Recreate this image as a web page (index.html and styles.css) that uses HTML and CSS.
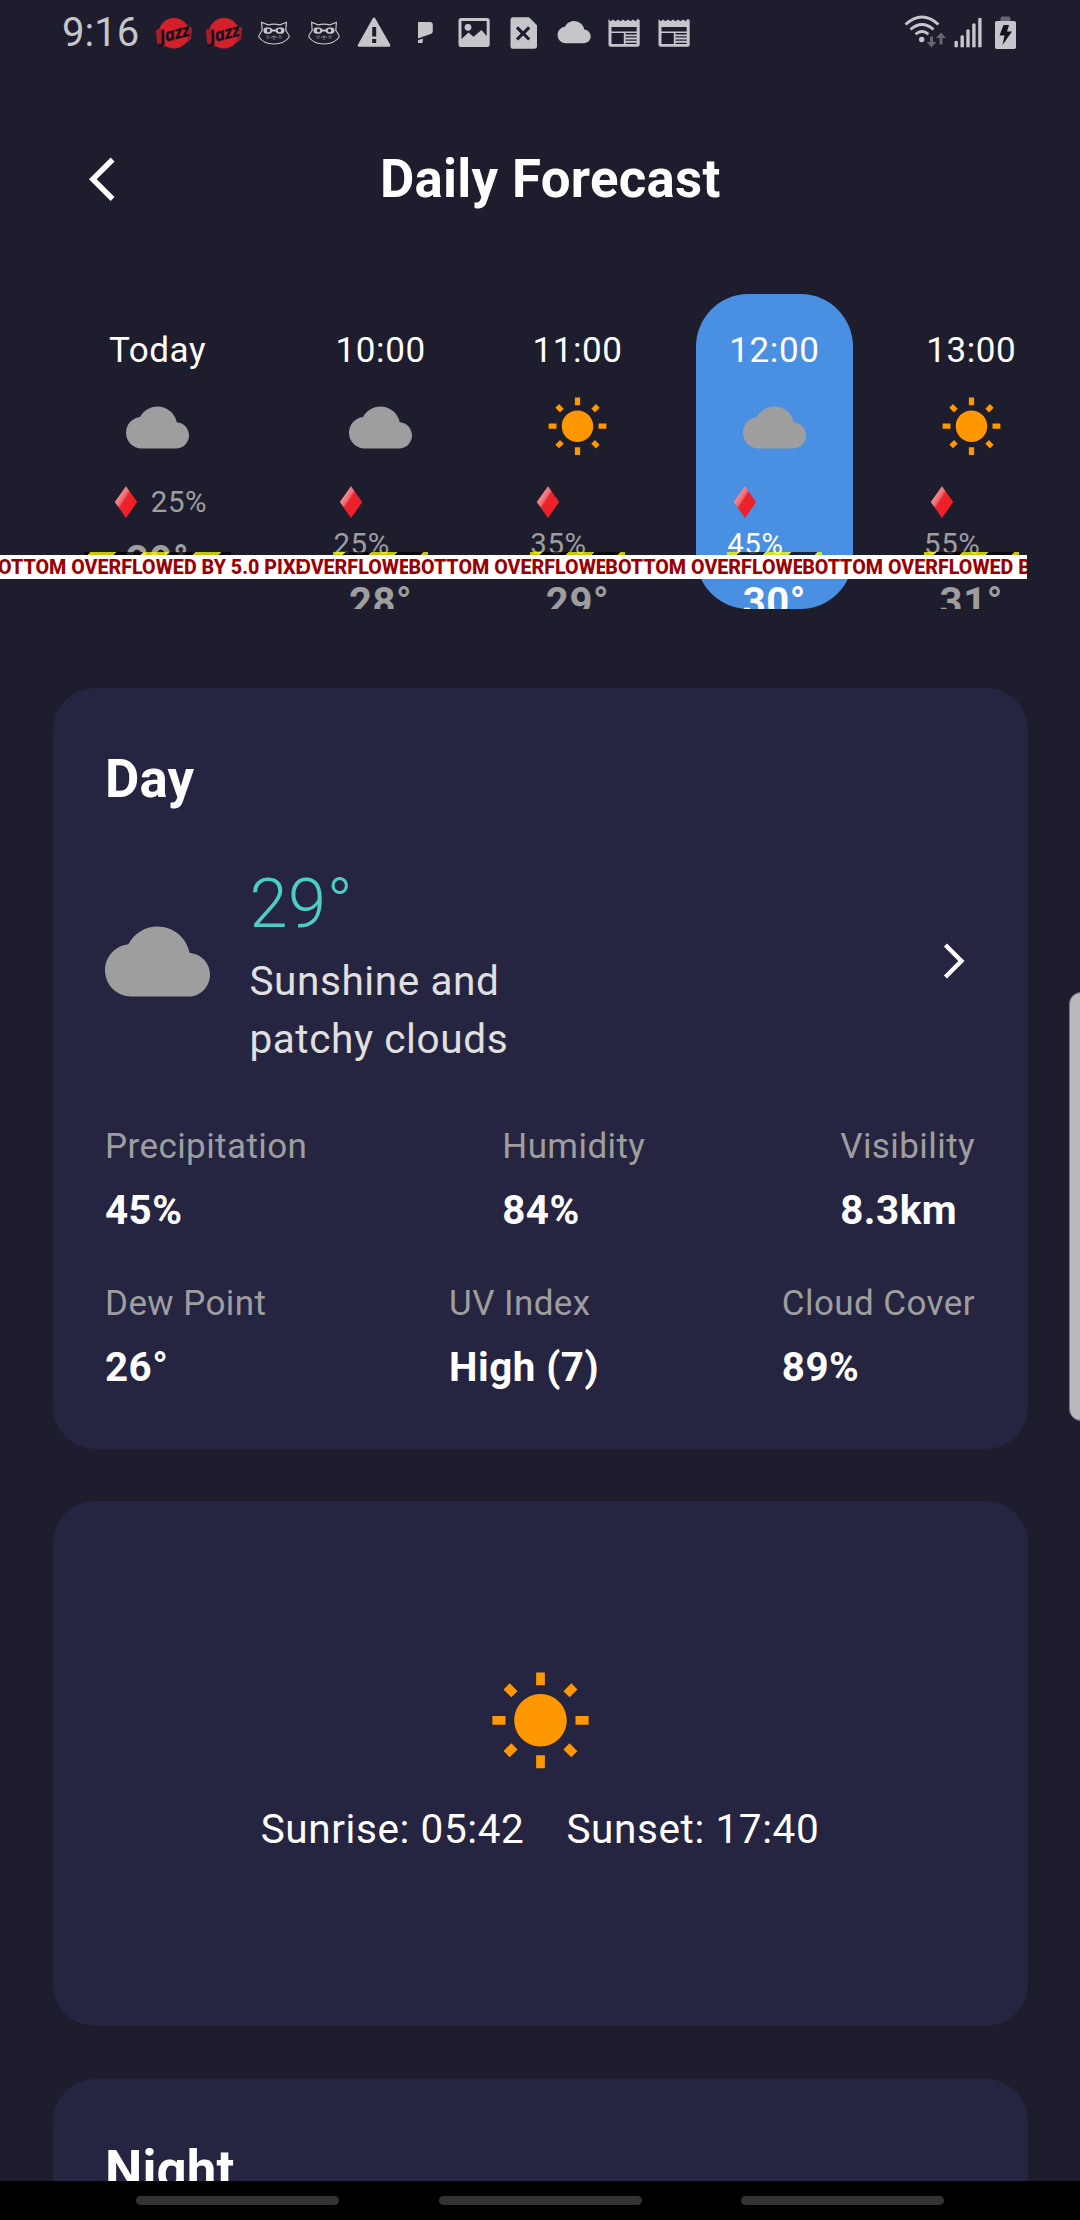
FILE: index.html
```html
<!DOCTYPE html>
<html lang="en">
<head>
<meta charset="utf-8">
<title>Daily Forecast</title>
<link rel="stylesheet" href="styles.css">
</head>
<body>
<svg class="defs" width="0" height="0" aria-hidden="true">
  <defs>
    <linearGradient id="gem" x1="0.1" y1="0.1" x2="0.75" y2="0.7">
      <stop offset="0" stop-color="#ffb3b8"/><stop offset="0.45" stop-color="#f0676d"/><stop offset="0.55" stop-color="#e8232b"/><stop offset="1" stop-color="#f0202a"/>
    </linearGradient>
    <symbol id="cloud" viewBox="0 0 24 24"><path d="M19.35 10.04C18.67 6.59 15.64 4 12 4 9.11 4 6.6 5.64 5.35 8.04 2.34 8.36 0 10.91 0 14c0 3.31 2.69 6 6 6h13c2.76 0 5-2.24 5-5 0-2.64-2.05-4.78-4.65-4.96z"/></symbol>
    <symbol id="sun" viewBox="0 0 24 24"><path d="M6.76 4.84l-1.8-1.79-1.41 1.41 1.79 1.79 1.42-1.41zM4 10.5H1v2h3v-2zm9-9.95h-2V3.5h2V.55zm7.45 3.91l-1.41-1.41-1.79 1.79 1.41 1.41 1.79-1.79zm-3.21 13.7l1.79 1.8 1.41-1.41-1.8-1.79-1.4 1.4zM20 10.5v2h3v-2h-3zm-8-5c-3.31 0-6 2.69-6 6s2.69 6 6 6 6-2.69 6-6-2.69-6-6-6zm-1 16.95h2V19.5h-2v2.95zm-7.45-3.91l1.41 1.41 1.79-1.8-1.41-1.41-1.79 1.8z"/></symbol>
    <symbol id="diamond" viewBox="0 0 36 36"><path d="M18 2.3L29.2 18 18 34 6.8 18z" fill="url(#gem)"/></symbol>
    <symbol id="jazz" viewBox="0 0 36 36">
      <circle cx="18" cy="18.3" r="15.3" fill="#d3202a"/>
      <path d="M0 15l5-2v17l-4-2zM36 13l-5-3v18l4-4zM4 30l6 2-2-4z" fill="#a81d29"/>
      <text x="18" y="24.5" text-anchor="middle" class="jazz-word" transform="rotate(-14 18 18)">Jazz</text>
    </symbol>
    <symbol id="cat" viewBox="0 0 36 36">
      <path d="M5.6 7.3l6.4 2.6q6-1.4 12 0l6.4-2.6-.6 8.2q3.6 4.6 3.4 6.5-5 7-15.2 7T2.800 22q-.2-1.900 3.400-6.500z" fill="none" stroke="#c6c5ca" stroke-width="1.200"/>
      <path d="M13 12.500q2.500 0 3.400 2h3.200q.9-2 3.400-2h2.500q3 0 3 3t-3 3.200H23q-2.500 0-3.400-2.200h-3.200q-.9 2.200-3.400 2.200h-2.500q-3 0-3-3.200t3-3z" fill="#c6c5ca"/>
      <circle cx="12.500" cy="15.500" r="1.700" fill="#1e1d2e"/><circle cx="23.500" cy="15.500" r="1.700" fill="#1e1d2e"/>
      <circle cx="12" cy="22" r="2" fill="#4b4a58"/><circle cx="24" cy="22" r="2" fill="#4b4a58"/>
      <path d="M15 22.500l3-1.500 3 1.500M18 21v4" fill="none" stroke="#85848e"/>
    </symbol>
    <symbol id="news" viewBox="0 0 36 36">
      <path fill-rule="evenodd" d="M2.500 4l2.200 2.200L7 4.400l2.500 1.800L12 4.400l2.500 1.800L17 4.400l2.500 1.800L22 4.400l2.500 1.800L27 4.400l2.500 1.800L31.700 4l2 1v24.500q0 2.300-2.300 2.300H4.800q-2.300 0-2.300-2.300zM5.500 12v4.500h25.200V12zM5.500 18v11h12.300V18zM19.500 18v1.600h11.200V18zm0 3.300v1.300h11.200v-1.300zm0 3.200v1.300h11.200v-1.300zm0 3.200V29h11.200v-1.300z"/>
    </symbol>
  </defs>
</svg>
<div class="screen">
  <div class="statusbar">
    <span class="clock">9:16</span>
    <div class="notices">
      <svg><use href="#jazz"/></svg>
      <svg><use href="#jazz"/></svg>
      <svg><use href="#cat"/></svg>
      <svg><use href="#cat"/></svg>
      <svg viewBox="0 0 36 36"><path fill-rule="evenodd" d="M18 2.500q.8 0 1.300 1l14.800 26q.8 2.200-1 2.300H3q-1.900-.1-1-2.300l14.700-26q.5-1 1.300-1zM16.200 12v9.500h4V12zm0 12v4h4v-4z"/></svg>
      <svg viewBox="0 0 36 36"><path d="M12 7h12q2.800 0 2.800 2.800v6.500q0 1.700-1.500 2.500L12 23.500zM12 25.200l4.800-1.700v3q0 1.500-1.500 1.500H12z"/></svg>
      <svg viewBox="0 0 36 36"><path fill-rule="evenodd" d="M5.300 3h25.600q2.800 0 2.800 2.800v23.400q0 2.800-2.800 2.800H5.300q-2.800 0-2.800-2.800V5.800Q2.500 3 5.300 3zM5.500 6v18l7-6.500 5 4.200 8-6.700 5.200 6V6z"/><circle cx="12" cy="12.300" r="3.400"/></svg>
      <svg viewBox="0 0 36 36"><path fill-rule="evenodd" d="M7.300 2.200H23l8 8v21.300q0 2.300-2.300 2.300H7q-2.500 0-2.500-2.300V4.800q0-2.600 2.800-2.600zM12 11.200L9.900 13.400l4.900 5-4.900 5 2.200 2.200 5-5 5 5 2.200-2.200-4.900-5 4.900-5-2.200-2.200-5 5z"/></svg>
      <svg viewBox="-0.600 -0.400 25 25"><use href="#cloud" width="24" height="23"/></svg>
      <svg><use href="#news"/></svg>
      <svg><use href="#news"/></svg>
    </div>
    <svg class="signals" viewBox="0 0 114 36">
      <g fill="none" stroke="#c6c5ca" stroke-width="2.800">
        <path d="M1.500 9.500Q18-5.500 34.500 9.500"/><path d="M6.500 14.500q11.500-10 23 0"/><path d="M11.500 19.300q6.500-5.500 13 0"/>
      </g>
      <circle cx="17.700" cy="24.500" r="2.700"/>
      <path fill="#65646f" d="M26 21.500h3V27h3.500l-5 5.500-5-5.500H26zM35.500 29.500h3V23H42l-5-5.500-5 5.500h3.500z"/>
      <path d="M50.500 26.500q1.700-1.500 3.400 0v5.700h-3.400zM56.500 21q1.700-1.500 3.400 0v11.200h-3.400zM62.300 15q1.700-1.500 3.400 0v17.200h-3.400zM68.200 9q1.700-1.500 3.400 0v23.200h-3.400zM74.200 3.500q1.700-1.500 3.400 0v28.700h-3.400z"/>
      <path fill="#65646f" d="M98 1.500h7q1.500 0 1.500 1.500v4h-10V3q0-1.500 1.500-1.500z"/>
      <rect x="91" y="6" width="21" height="28" rx="1.800"/>
      <path fill="#14131c" d="M99.500 10h5.500l-2 6.500h5L98.500 30l2-9.500h-5z"/>
    </svg>
  </div>

  <header class="header">
    <svg class="back" viewBox="0 0 24 24"><path d="M11.670 3.870L9.900 2.100 0 12l9.900 9.900 1.770-1.770L3.540 12z"/></svg>
    <h1 class="title">Daily Forecast</h1>
  </header>

  <section class="strip">
    <div class="slot today">
      <span class="hour">Today</span>
      <svg class="sky grey"><use href="#cloud"/></svg>
      <div class="rain"><svg class="gem"><use href="#diamond"/></svg><span>25%</span></div>
      <span class="temp">29°</span>
      <div class="overflow"><span class="overflow-text">BOTTOM OVERFLOWED BY 5.0 PIXELS</span></div>
    </div>
    <div class="hours">
      <div class="slot">
        <span class="hour">10:00</span>
        <svg class="sky grey"><use href="#cloud"/></svg>
        <div class="rain"><svg class="gem"><use href="#diamond"/></svg><span>25%</span></div>
        <span class="temp">28°</span>
        <div class="overflow"><span class="overflow-text">BOTTOM OVERFLOWED BY 21 PIXELS</span></div>
      </div>
      <div class="slot">
        <span class="hour">11:00</span>
        <svg class="sky orange"><use href="#sun"/></svg>
        <div class="rain"><svg class="gem"><use href="#diamond"/></svg><span>35%</span></div>
        <span class="temp">29°</span>
        <div class="overflow"><span class="overflow-text">BOTTOM OVERFLOWED BY 21 PIXELS</span></div>
      </div>
      <div class="slot selected">
        <span class="hour">12:00</span>
        <svg class="sky grey"><use href="#cloud"/></svg>
        <div class="rain"><svg class="gem"><use href="#diamond"/></svg><span>45%</span></div>
        <span class="temp">30°</span>
        <div class="overflow"><span class="overflow-text">BOTTOM OVERFLOWED BY 21 PIXELS</span></div>
      </div>
      <div class="slot">
        <span class="hour">13:00</span>
        <svg class="sky orange"><use href="#sun"/></svg>
        <div class="rain"><svg class="gem"><use href="#diamond"/></svg><span>55%</span></div>
        <span class="temp">31°</span>
        <div class="overflow"><span class="overflow-text">BOTTOM OVERFLOWED BY 21 PIXELS</span></div>
      </div>
    </div>
  </section>

  <main class="cards">
    <section class="card">
      <h2 class="card-title">Day</h2>
      <div class="summary">
        <svg class="big-icon grey"><use href="#cloud"/></svg>
        <div class="summary-text">
          <div class="degrees">29°</div>
          <div class="phrase">Sunshine and<br>patchy clouds</div>
        </div>
        <svg class="forward" viewBox="0 0 24 24"><path d="M6.230 20.230L8 22l10-10L8 2 6.230 3.770 14.460 12z"/></svg>
      </div>
      <div class="facts">
        <div class="fact"><span class="label">Precipitation</span><span class="value">45%</span></div>
        <div class="fact"><span class="label">Humidity</span><span class="value">84%</span></div>
        <div class="fact"><span class="label">Visibility</span><span class="value">8.3km</span></div>
      </div>
      <div class="facts">
        <div class="fact"><span class="label">Dew Point</span><span class="value">26°</span></div>
        <div class="fact"><span class="label">UV Index</span><span class="value">High (7)</span></div>
        <div class="fact"><span class="label">Cloud Cover</span><span class="value">89%</span></div>
      </div>
    </section>
    <section class="card sun-card">
      <svg class="big-icon orange"><use href="#sun"/></svg>
      <div class="sun-times"><span>Sunrise: 05:42</span><span>Sunset: 17:40</span></div>
    </section>
    <section class="card night">
      <h2 class="card-title">Night</h2>
    </section>
  </main>

  <nav class="navbar"><i></i><i></i><i></i></nav>
  <div class="edge-handle"></div>
</div>
</body>
</html>
```

FILE: styles.css
```css
* { box-sizing: border-box; }
body { margin: 0; background: #1e1d2e; }
.defs { position: absolute; }
svg { display: block; flex: none; }
h1, h2 { margin: 0; font-weight: 700; }

.screen {
  position: relative;
  width: 1080px;
  height: 2220px;
  overflow: hidden;
  display: flex;
  flex-direction: column;
  background: #1e1d2e;
  color: #fff;
  font-family: Roboto, "Liberation Sans", sans-serif;
  font-size: 35px;
  letter-spacing: 0.6px;
}

/* status bar */
.statusbar {
  flex: none;
  height: 66px;
  padding: 0 62px 0 62px;
  display: flex;
  align-items: center;
  color: #c6c5ca;
}
.statusbar svg { fill: #c6c5ca; }
.clock { width: 94px; font-size: 40px; line-height: 68px; letter-spacing: 0; }
.notices { display: flex; gap: 14px; }
.notices svg { width: 36px; height: 36px; }
.jazz-word { font: italic 700 17.5px "Open Sans", sans-serif; letter-spacing: -0.5px; fill: #17121f; stroke: #17121f; stroke-width: 0.3px; }
.signals { width: 114px; height: 36px; margin-left: auto; }

/* header */
.header {
  flex: none;
  height: 228px;
  padding: 0 0 2px 89.4px;
  display: flex;
  align-items: center;
  gap: 238px;
}
.back { width: 52.5px; height: 52.5px; fill: #fff; }
.title { font-size: 52.8px; line-height: 75px; letter-spacing: 0.3px; }

/* hourly strip */
.strip { flex: none; height: 315px; padding: 0 52.5px; display: flex; gap: 39.4px; }
.hours { flex: none; width: 725.6px; height: 315px; display: flex; gap: 39.375px; overflow: hidden; }
.slot {
  position: relative;
  flex: none;
  width: 157.5px;
  height: 315px;
  padding: 31.5px;
  display: flex;
  flex-direction: column;
  align-items: center;
}
.today { width: 210px; }
.selected { background: #4a90e2; border-radius: 52.5px; }
.hour { line-height: 49px; white-space: nowrap; }
.sky { width: 63px; height: 63px; margin: 21px 0 22px; }
.grey { fill: #9e9e9e; }
.orange { fill: #ff9800; }
.rain {
  flex: none;
  display: flex;
  flex-wrap: wrap;
  column-gap: 7px;
  width: 94.5px;
  font-size: 29.4px;
  line-height: 42px;
  color: #9e9e9e;
}
.today .rain { width: auto; }
.gem { width: 36px; height: 42px; }
.temp { margin-top: 10.5px; font-size: 40px; font-weight: 700; line-height: 56.3px; color: #9e9e9e; }
.today .temp { height: 31px; overflow: hidden; }
.selected .rain, .selected .temp { color: #fff; }

/* layout overflow marker */
.overflow {
  position: absolute;
  left: 31.5px;
  right: 31.5px;
  top: 257.5px;
  height: 26px;
  display: flex;
  justify-content: center;
  align-items: flex-end;
  background: repeating-linear-gradient(135deg, rgba(255,255,0,.75) 0 8.49px, rgba(0,0,0,.75) 8.49px 27.05px, rgba(255,255,0,.75) 27.05px 37.12px);
}
.today .overflow {
  background: repeating-linear-gradient(135deg, rgba(0,0,0,.75) 0 4.64px, rgba(255,255,0,.75) 4.64px 23.2px, rgba(0,0,0,.75) 23.2px 37.12px);
}
.overflow-text {
  flex: none;
  margin-bottom: -1.5px;
  padding-top: 1px;
  background: #fff;
  color: #900;
  font-size: 19.69px;
  font-weight: 800;
  line-height: 23px;
  letter-spacing: 0;
  white-space: nowrap;
}

/* cards */
.cards {
  flex: 1;
  min-height: 0;
  overflow: hidden;
  padding: 78.75px 52.5px 0;
  display: flex;
  flex-direction: column;
  gap: 52.5px;
}
.card { flex: none; padding: 52.5px; border-radius: 42px; background: #262541; }
.card-title { padding-top: 1.5px; font-size: 52.8px; line-height: 75px; letter-spacing: 0.15px; }
.summary { display: flex; align-items: center; margin: 37.9px 0 54.5px; }
.big-icon { width: 105px; height: 105px; }
.summary-text { flex: 1; margin-left: 39.4px; }
.degrees { padding-top: 1px; font-size: 68.6px; font-weight: 300; line-height: 96px; color: #4ecdc4; }
.phrase { font-size: 40.5px; line-height: 58px; color: #e0e0e0; }
.forward { width: 42px; height: 42px; fill: #fff; }
.facts { display: flex; justify-content: space-between; }
.facts + .facts { margin-top: 40px; }
.fact { display: flex; flex-direction: column; gap: 11px; }
.label { line-height: 49px; letter-spacing: 0.42px; color: #9e9e9e; }
.value { font-size: 40.3px; font-weight: 700; line-height: 57px; letter-spacing: 0.5px; }
.sun-card {
  height: 525px;
  display: flex;
  flex-direction: column;
  align-items: center;
  justify-content: center;
  gap: 26.25px;
}
.sun-times { display: flex; gap: 42px; font-size: 40.5px; line-height: 56px; }
.night { height: 300px; }

/* system navigation */
.navbar { flex: none; height: 39px; display: flex; justify-content: center; gap: 99.5px; padding-top: 15px; background: #000; }
.navbar i { width: 203px; height: 9px; border-radius: 5px; background: #333; }
.edge-handle {
  position: absolute;
  left: 1069px;
  top: 992px;
  width: 24px;
  height: 429px;
  border: 1.5px solid #77767c;
  border-radius: 14px;
  background: #b9b8be;
}
```
